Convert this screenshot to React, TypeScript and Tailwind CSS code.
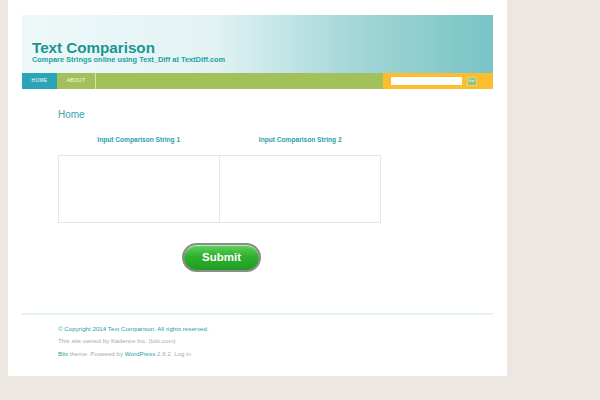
export default function App() {
  return (
    <div className="min-h-[400px] w-[600px] bg-[#ece7e1] font-['Liberation_Sans',Arial,sans-serif]">
      <div className="ml-2 h-[376px] w-[499px] bg-white px-[14px] pt-[15px]">
        {/* Header */}
        <header className="flex h-[58px] flex-col justify-end bg-[linear-gradient(to_right,#eef8f9_0%,#e3f3f4_40%,#a5d7d8_70%,#78c4c5_100%)] pb-[9px] pl-[10px]">
          <h1 className="text-[15.2px] font-bold leading-[17px] text-[#1a9592]">Text Comparison</h1>
          <p className="text-[7.4px] font-bold leading-[8px] text-[#22a0a6]">
            Compare Strings online using Text_Diff at TextDiff.com
          </p>
        </header>

        {/* Nav */}
        <nav className="flex h-[16px] text-[4.8px] tracking-[0.08em] text-white">
          <a className="flex w-[35px] items-center justify-center bg-[#2aa4b6]">HOME</a>
          <a className="flex w-[39px] items-center justify-center border-r border-[#d4e6b0] bg-[#a2c15a]">ABOUT</a>
          <div className="flex-1 bg-[#a2c15a]" />
          <div className="flex w-[110px] items-center gap-[5px] bg-[#fcbd2e] pl-[8px]">
            <input className="h-[8px] w-[71px] bg-white outline-none" />
            <button className="flex h-[9px] w-[10px] items-center justify-center border border-[#c9dfa0] bg-[#9cc167] text-[4px] text-white">
              Go!
            </button>
          </div>
        </nav>

        {/* Content */}
        <main className="pl-[36px]">
          <h2 className="mt-[20px] text-[10px] leading-[12px] text-[#3aa4ac]">Home</h2>
          <div className="mt-[14px] grid w-[323px] grid-cols-2 text-center text-[6.6px] font-bold text-[#2ca0ae]">
            <div>Input Comparison String 1</div>
            <div>Input Comparison String 2</div>
          </div>
          <div className="mt-[10px] grid h-[68px] w-[323px] grid-cols-2 border border-[#e6e6e6]">
            <div className="border-r border-[#e6e6e6]" />
            <div />
          </div>
          <div className="flex w-[327px] justify-center pt-[20px]">
            <button className="flex h-[29px] w-[79px] items-center justify-center rounded-full border-2 border-[#8c8c8c] bg-[linear-gradient(to_bottom,#5fd35f_0%,#30b030_45%,#1f9d1f_100%)] text-[11.5px] font-bold text-white shadow-[inset_0_1px_1px_rgba(255,255,255,0.6)]">
              Submit
            </button>
          </div>
        </main>

        {/* Footer */}
        <footer className="mt-[41px] border-t-2 border-[#e4f3f4] pl-[36px] pt-[8px] text-[6.2px] leading-[12.5px] text-[#aaaaaa]">
          <p className="text-[#2aa0a8]">© Copyright 2014 Text Comparison. All rights reserved.</p>
          <p>This site owned by Kadence Inc. (lolx.com)</p>
          <p>
            <span className="text-[#2aa0a8]">Blix</span> theme. Powered by{" "}
            <span className="text-[#2aa0a8]">WordPress</span> 2.8.2. Log in
          </p>
        </footer>
      </div>
    </div>
  );
}
